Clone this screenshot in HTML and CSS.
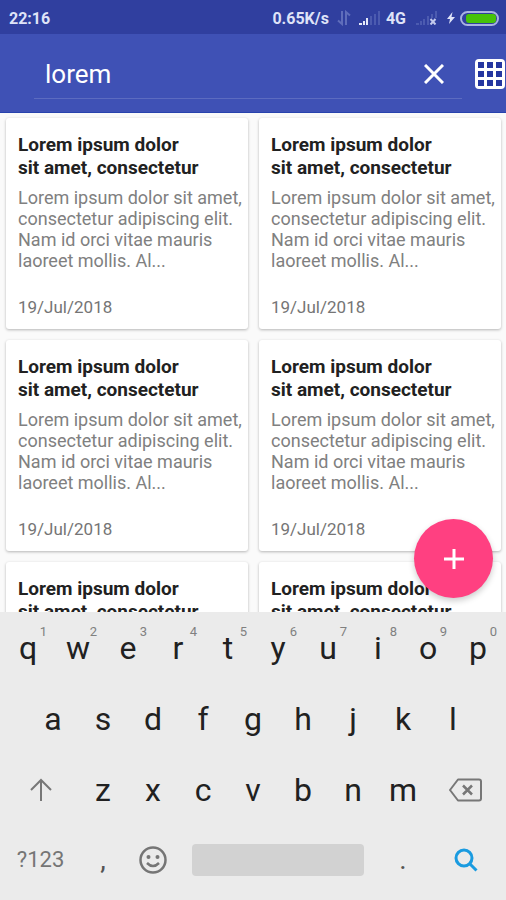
FILE: index.html
```html
<!DOCTYPE html>
<html lang="en">
<head>
<meta charset="utf-8">
<meta name="viewport" content="width=device-width, initial-scale=1">
<title>Notes</title>
<link rel="stylesheet" href="styles.css">
</head>
<body>
<div class="status">
  <span class="clock">22:16</span>
  <span>0.65K/s</span>
  <svg class="net" width="14" height="16" viewBox="0 0 14 16" fill="none" stroke="#5f6dbb" stroke-width="2"><path d="M5 1v13L1 10.500M9 15V2L13 5.500"/></svg>
  <svg class="signal" width="21" height="14" viewBox="0 0 21 14"><path fill="#e4e7f8" d="M0 12h3v2H0zM4 10h2v4H4zM7 7h2v7H7z"/><path fill="#4c5bb0" d="M11 5h2v9h-2zM15 3h2v11h-2zM19 0h2v14h-2z"/></svg>
  <span>4G</span>
  <svg class="signal-off" width="21" height="14" viewBox="0 0 21 14"><path fill="#4c5bb0" d="M0 12h3v2H0zM4 10h2v4H4zM7 8h2v6H7zM11 5h2v9h-2zM15 3h2v4h-2zM19 0h2v7h-2z"/><path stroke="#c3c9ec" stroke-width="2" d="M14.500 8l5 5.500M19.500 8l-5 5.500"/></svg>
  <svg class="bolt" width="8" height="12" viewBox="0 0 8 12"><path fill="#dfe3f8" d="M5.500 0L0 7h3L2 12l6-7H4.500z"/></svg>
  <svg width="39" height="15" viewBox="0 0 39 15"><rect x="1" y="1" width="37" height="13" rx="6.500" fill="none" stroke="#a9b2e2" stroke-width="2"/><rect x="6" y="3" width="30" height="9" rx="3" fill="#46c20a"/></svg>
</div>
<header class="toolbar">
  <div class="search">
    <input class="query" type="text" value="lorem" aria-label="Search notes">
    <button class="icon-button" aria-label="Clear"><svg width="20" height="20" viewBox="0 0 20 20" stroke="#fff" stroke-width="3"><path d="M1 1l18 18M19 1L1 19"/></svg></button>
  </div>
  <button class="icon-button" aria-label="Grid view"><svg width="30" height="30" viewBox="0 0 30 30"><rect width="30" height="30" rx="4" fill="#fff"/><path fill="#2536a0" d="M3 3h6v6H3zM12 3h6v6h-6zM21 3h6v6h-6zM3 12h6v6H3zM12 12h6v6h-6zM21 12h6v6h-6zM3 21h6v6H3zM12 21h6v6h-6zM21 21h6v6h-6z"/></svg></button>
</header>
<main class="content">
  <div class="notes">
    <article class="card"><h2>Lorem ipsum dolor<br>sit amet, consectetur</h2><p>Lorem ipsum dolor sit amet, consectetur adipiscing elit. Nam id orci vitae mauris laoreet mollis. Al...</p><time datetime="2018-07-19">19/Jul/2018</time></article>
    <article class="card"><h2>Lorem ipsum dolor<br>sit amet, consectetur</h2><p>Lorem ipsum dolor sit amet, consectetur adipiscing elit. Nam id orci vitae mauris laoreet mollis. Al...</p><time datetime="2018-07-19">19/Jul/2018</time></article>
    <article class="card"><h2>Lorem ipsum dolor<br>sit amet, consectetur</h2><p>Lorem ipsum dolor sit amet, consectetur adipiscing elit. Nam id orci vitae mauris laoreet mollis. Al...</p><time datetime="2018-07-19">19/Jul/2018</time></article>
    <article class="card"><h2>Lorem ipsum dolor<br>sit amet, consectetur</h2><p>Lorem ipsum dolor sit amet, consectetur adipiscing elit. Nam id orci vitae mauris laoreet mollis. Al...</p><time datetime="2018-07-19">19/Jul/2018</time></article>
    <article class="card"><h2>Lorem ipsum dolor<br>sit amet, consectetur</h2></article>
    <article class="card"><h2>Lorem ipsum dolor<br>sit amet, consectetur</h2></article>
  </div>
  <button class="fab" aria-label="Add note"><svg width="20" height="20" viewBox="0 0 20 20" stroke="#fff" stroke-width="3"><path d="M10 0v20M0 10h20"/></svg></button>
</main>
<div class="keyboard">
  <div class="row">
    <button class="key">q<span class="hint">1</span></button><button class="key">w<span class="hint">2</span></button><button class="key">e<span class="hint">3</span></button><button class="key">r<span class="hint">4</span></button><button class="key">t<span class="hint">5</span></button><button class="key">y<span class="hint">6</span></button><button class="key">u<span class="hint">7</span></button><button class="key">i<span class="hint">8</span></button><button class="key">o<span class="hint">9</span></button><button class="key">p<span class="hint">0</span></button>
  </div>
  <div class="row row-inset">
    <button class="key">a</button><button class="key">s</button><button class="key">d</button><button class="key">f</button><button class="key">g</button><button class="key">h</button><button class="key">j</button><button class="key">k</button><button class="key">l</button>
  </div>
  <div class="row">
    <button class="key key-wide" aria-label="Shift"><svg width="22" height="24" viewBox="0 0 22 24" fill="none" stroke="#777" stroke-width="2"><path d="M11 23V2M1 12L11 2l10 10"/></svg></button>
    <button class="key">z</button><button class="key">x</button><button class="key">c</button><button class="key">v</button><button class="key">b</button><button class="key">n</button><button class="key">m</button>
    <button class="key key-wide" aria-label="Backspace"><svg width="33" height="24" viewBox="0 0 33 24" fill="none" stroke="#777" stroke-width="2"><path stroke-linejoin="round" d="M9 1.500h21q2 0 2 2v17q0 2-2 2H9L1 12z"/><path stroke-width="2.500" d="M14 7.500l9 9M23 7.500l-9 9"/></svg></button>
  </div>
  <div class="row">
    <button class="key key-wide key-symbols">?123</button>
    <button class="key key-mark">,</button>
    <button class="key" aria-label="Emoji"><svg width="28" height="28" viewBox="0 0 28 28" fill="none" stroke="#757575" stroke-width="2.500"><circle cx="14" cy="14" r="12.500"/><path d="M8 17q6 6 12 0"/><g fill="#757575" stroke="none"><circle cx="9.500" cy="11" r="2"/><circle cx="18.500" cy="11" r="2"/></g></svg></button>
    <button class="key key-space" aria-label="Space"><span class="space-bar"></span></button>
    <button class="key key-mark">.</button>
    <button class="key key-wide" aria-label="Search"><svg width="24" height="24" viewBox="0 0 24 24" fill="none" stroke="#1a9be0" stroke-width="3"><circle cx="10" cy="10" r="8"/><path d="M15.500 15.500l7 7"/></svg></button>
  </div>
</div>
</body>
</html>
```
FILE: styles.css
```css
* { box-sizing: border-box; }
body {
  margin: 0;
  height: 100vh;
  display: flex;
  flex-direction: column;
  overflow: hidden;
  background: #fafafa;
  font-family: Roboto, sans-serif;
}
button {
  border: 0;
  padding: 0;
  background: none;
  font: inherit;
  color: inherit;
}
svg { display: block; flex: none; }

.status {
  flex: none;
  display: flex;
  align-items: center;
  height: 34px;
  padding: 2px 7px 0 9px;
  background: #303f9f;
  color: #dfe3f8;
  font-size: 16px;
  font-weight: 700;
}
.clock { margin-right: auto; }
.net { margin: 0 8px; }
.signal { margin-right: 6px; }
.signal-off { margin: 0 10px; }
.bolt { margin-right: 5px; }

.toolbar {
  flex: none;
  display: flex;
  align-items: center;
  gap: 13px;
  height: 79px;
  padding: 2px 1px 0 34px;
  background: #3f51b5;
  border-bottom: 1px solid #2742ad;
}
.search {
  flex: 1;
  display: flex;
  align-items: center;
  height: 50px;
  padding: 0 18px 0 11px;
  border-bottom: 1px solid #5c6bc0;
}
.query {
  flex: 1;
  min-width: 0;
  padding: 0;
  border: 0;
  outline: 0;
  background: none;
  color: #fff;
  font: 26px Roboto, sans-serif;
}

.content {
  position: relative;
  flex: 1;
  min-height: 0;
  overflow: hidden;
}
.notes {
  display: grid;
  grid-template-columns: 1fr 1fr;
  gap: 11px;
  padding: 5px 5px 0 6px;
}
.card {
  padding: 15px 0 11px 12px;
  background: #fff;
  border-radius: 3px;
  box-shadow: 0 1px 3px rgba(0, 0, 0, 0.28);
}
.card h2 {
  margin: 0 0 8px;
  color: #212121;
  font-size: 19px;
  line-height: 23px;
  font-weight: 700;
}
.card p {
  margin: 0 0 25px;
  color: #808080;
  font-size: 18px;
  line-height: 21px;
}
.card time {
  display: block;
  color: #757575;
  font-size: 17px;
  line-height: 22px;
}
.fab {
  position: absolute;
  right: 13px;
  bottom: 14px;
  display: grid;
  place-items: center;
  width: 79px;
  height: 79px;
  border-radius: 50%;
  background: #ff4081;
  box-shadow: 0 3px 6px rgba(0, 0, 0, 0.2);
}

.keyboard {
  flex: none;
  padding: 0 3px;
  background: #ebebeb;
  color: #212121;
}
.row { display: flex; height: 71px; }
.row:last-child { height: 75px; padding-bottom: 6px; }
.row-inset { padding: 0 25px; }
.key {
  position: relative;
  flex: 50 1 0;
  min-width: 0;
  display: flex;
  align-items: center;
  justify-content: center;
  font-size: 32px;
}
.key-wide { flex-grow: 75; }
.key-symbols { color: #757575; font-size: 22px; }
.key-space { flex-grow: 200; }
.key-mark { color: #555; font-size: 28px; }
.space-bar {
  flex: 1;
  height: 32px;
  margin: 0 14px;
  border-radius: 4px;
  background: #d2d2d2;
}
.hint {
  position: absolute;
  top: 12px;
  right: 6px;
  color: #808080;
  font-size: 13px;
  line-height: 15px;
}
```
